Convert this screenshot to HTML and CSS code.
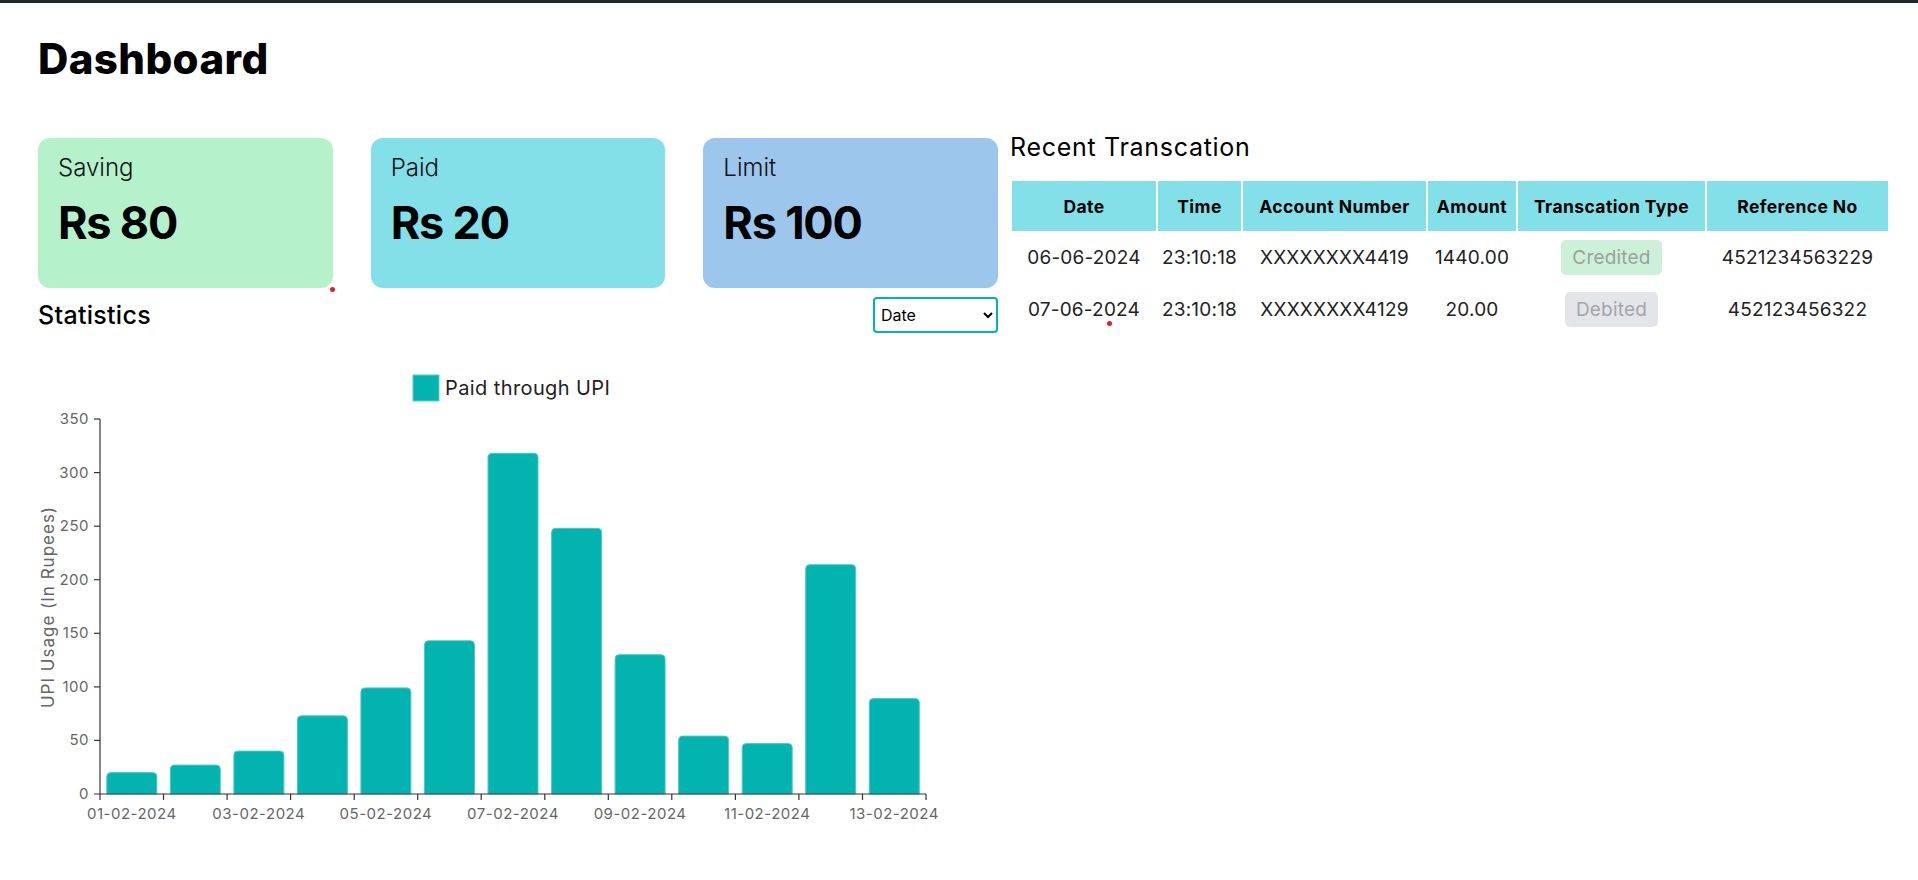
FILE: index.html
```html
<!DOCTYPE html>
<html lang="en">
<head>
<meta charset="utf-8">
<title>Dashboard</title>
<link rel="stylesheet" href="styles.css">
</head>
<body>
<div class="topbar"></div>
<div class="page">
  <h1 class="title">Dashboard</h1>
  <div class="main">
    <section class="left">
      <div class="cards">
        <div class="card card-saving">
          <div class="card-label">Saving</div>
          <div class="card-value">Rs 80</div>
        </div>
        <div class="card card-paid">
          <div class="card-label">Paid</div>
          <div class="card-value">Rs 20</div>
        </div>
        <div class="card card-limit">
          <div class="card-label">Limit</div>
          <div class="card-value">Rs 100</div>
        </div>
      </div>
      <div class="stats-head">
        <h2 class="stats-title">Statistics</h2>
        <select class="stats-select">
          <option>Date</option>
          <option>Month</option>
        </select>
      </div>
      <svg class="chart" width="960" height="470" viewBox="0 0 960 470">
        <rect x="375" y="15" width="26" height="26" fill="#03b3af" stroke="#5ccfcb" stroke-width="1"/>
        <text class="legend-text" x="407" y="35">Paid through UPI</text>

        <text class="axis-title" x="0" y="0" transform="translate(10 247) rotate(-90)" text-anchor="middle" dominant-baseline="central">UPI Usage (In Rupees)</text>

        <g class="bars" fill="#03b3af" stroke="#4ec9c5" stroke-width="1">
          <path d="M68.8 434 V416.6 Q68.8 412.6 72.8 412.6 H114.8 Q118.8 412.6 118.8 416.6 V434 Z"/>
          <path d="M132.3 434 V409.1 Q132.3 405.1 136.3 405.1 H178.3 Q182.3 405.1 182.3 409.1 V434 Z"/>
          <path d="M195.9 434 V395.1 Q195.9 391.1 199.9 391.1 H241.9 Q245.9 391.1 245.9 395.1 V434 Z"/>
          <path d="M259.4 434 V359.8 Q259.4 355.8 263.4 355.8 H305.4 Q309.4 355.8 309.4 359.8 V434 Z"/>
          <path d="M322.9 434 V331.9 Q322.9 327.9 326.9 327.9 H368.9 Q372.9 327.9 372.9 331.9 V434 Z"/>
          <path d="M386.5 434 V284.8 Q386.5 280.8 390.5 280.8 H432.5 Q436.5 280.8 436.5 284.8 V434 Z"/>
          <path d="M450.0 434 V97.3 Q450.0 93.3 454.0 93.3 H496.0 Q500.0 93.3 500.0 97.3 V434 Z"/>
          <path d="M513.6 434 V172.3 Q513.6 168.3 517.6 168.3 H559.6 Q563.6 168.3 563.6 172.3 V434 Z"/>
          <path d="M577.1 434 V298.7 Q577.1 294.7 581.1 294.7 H623.1 Q627.1 294.7 627.1 298.7 V434 Z"/>
          <path d="M640.6 434 V380.1 Q640.6 376.1 644.6 376.1 H686.6 Q690.6 376.1 690.6 380.1 V434 Z"/>
          <path d="M704.2 434 V387.6 Q704.2 383.6 708.2 383.6 H750.2 Q754.2 383.6 754.2 387.6 V434 Z"/>
          <path d="M767.7 434 V208.7 Q767.7 204.7 771.7 204.7 H813.7 Q817.7 204.7 817.7 208.7 V434 Z"/>
          <path d="M831.3 434 V342.6 Q831.3 338.6 835.3 338.6 H877.3 Q881.3 338.6 881.3 342.6 V434 Z"/>
        </g>

        <g class="axis" stroke="#333" stroke-width="1.2">
          <line x1="62" y1="59" x2="62" y2="440"/>
          <line x1="56" y1="434" x2="888" y2="434"/>
          <line x1="56" y1="380.4" x2="62" y2="380.4"/>
          <line x1="56" y1="326.9" x2="62" y2="326.9"/>
          <line x1="56" y1="273.3" x2="62" y2="273.3"/>
          <line x1="56" y1="219.7" x2="62" y2="219.7"/>
          <line x1="56" y1="166.2" x2="62" y2="166.2"/>
          <line x1="56" y1="112.6" x2="62" y2="112.6"/>
          <line x1="56" y1="59" x2="62" y2="59"/>
          <line x1="125.5" y1="434" x2="125.5" y2="440"/>
          <line x1="189.1" y1="434" x2="189.1" y2="440"/>
          <line x1="252.6" y1="434" x2="252.6" y2="440"/>
          <line x1="316.2" y1="434" x2="316.2" y2="440"/>
          <line x1="379.7" y1="434" x2="379.7" y2="440"/>
          <line x1="443.2" y1="434" x2="443.2" y2="440"/>
          <line x1="506.8" y1="434" x2="506.8" y2="440"/>
          <line x1="570.3" y1="434" x2="570.3" y2="440"/>
          <line x1="633.8" y1="434" x2="633.8" y2="440"/>
          <line x1="697.4" y1="434" x2="697.4" y2="440"/>
          <line x1="760.9" y1="434" x2="760.9" y2="440"/>
          <line x1="824.5" y1="434" x2="824.5" y2="440"/>
          <line x1="888" y1="434" x2="888" y2="440"/>
        </g>

        <g class="tick-text" text-anchor="end">
          <text x="51" y="439">0</text>
          <text x="51" y="385.4">50</text>
          <text x="51" y="331.9">100</text>
          <text x="51" y="278.3">150</text>
          <text x="51" y="224.7">200</text>
          <text x="51" y="171.2">250</text>
          <text x="51" y="117.6">300</text>
          <text x="51" y="64">350</text>
        </g>
        <g class="tick-text" text-anchor="middle">
          <text x="93.8" y="459">01-02-2024</text>
          <text x="220.8" y="459">03-02-2024</text>
          <text x="347.9" y="459">05-02-2024</text>
          <text x="475.0" y="459">07-02-2024</text>
          <text x="602.1" y="459">09-02-2024</text>
          <text x="729.2" y="459">11-02-2024</text>
          <text x="856.2" y="459">13-02-2024</text>
        </g>
      </svg>
    </section>

    <section class="right">
      <h2 class="recent-title">Recent Transcation</h2>
      <table class="tx">
        <thead>
          <tr>
            <th class="c-date">Date</th>
            <th class="c-time">Time</th>
            <th class="c-acc">Account Number</th>
            <th class="c-amt">Amount</th>
            <th class="c-type">Transcation Type</th>
            <th class="c-ref">Reference No</th>
          </tr>
        </thead>
        <tbody>
          <tr>
            <td>06-06-2024</td>
            <td>23:10:18</td>
            <td>XXXXXXXX4419</td>
            <td>1440.00</td>
            <td><span class="badge badge-credit">Credited</span></td>
            <td>4521234563229</td>
          </tr>
          <tr>
            <td>07-06-2024</td>
            <td>23:10:18</td>
            <td>XXXXXXXX4129</td>
            <td>20.00</td>
            <td><span class="badge badge-debit">Debited</span></td>
            <td>452123456322</td>
          </tr>
        </tbody>
      </table>
    </section>
  </div>
</div>
<span class="dot dot-a"></span>
<span class="dot dot-b"></span>
</body>
</html>
```

FILE: styles.css
```css
* { box-sizing: border-box; }

html, body {
  margin: 0;
  padding: 0;
  background: #ffffff;
}

body {
  position: relative;
  font-family: "Inter", "Open Sans", sans-serif;
  color: #111;
  width: 1918px;
  height: 880px;
  overflow: hidden;
}

.topbar {
  height: 3px;
  background: #1f262b;
}

.page {
  padding: 0 28px 0 38px;
}

.title {
  margin: 0;
  padding-top: 31px;
  font-size: 42px;
  line-height: 50px;
  font-weight: 800;
  letter-spacing: 0.4px;
  color: #000;
}

.main {
  display: flex;
  gap: 12px;
  margin-top: 48px;
}

.left {
  width: 960px;
  flex: none;
  padding-top: 6px;
}

.cards {
  display: flex;
  gap: 38px;
}

.card {
  width: 295px;
  height: 150px;
  border-radius: 12px;
  padding: 15px 20px 0 20px;
}

.card-saving { background: #b5f2cb; }
.card-paid { background: #83e0e8; }
.card-limit { background: #9cc6ec; }

.card-label {
  font-size: 24px;
  line-height: 29px;
  font-weight: 300;
  color: #111;
}

.card-value {
  margin-top: 13px;
  font-size: 45px;
  line-height: 56px;
  font-weight: 700;
  letter-spacing: -1.2px;
  color: #000;
}

.stats-head {
  display: flex;
  align-items: center;
  justify-content: space-between;
  height: 36px;
  margin-top: 9px;
}

.stats-title {
  margin: 0;
  font-size: 25px;
  line-height: 30px;
  font-weight: 500;
  letter-spacing: 0.3px;
  color: #000;
}

.stats-select {
  width: 125px;
  height: 36px;
  border: 2px solid #03b3af;
  border-radius: 4px;
  background: #fff;
  font-family: "Inter", sans-serif;
  font-size: 16px;
  color: #000;
  padding: 0 2px;
}

.chart {
  display: block;
  margin-top: 27px;
  font-family: "Inter", "Open Sans", sans-serif;
}

.legend-text {
  font-size: 20px;
  letter-spacing: 0.4px;
  fill: #222;
}

.axis-title {
  font-size: 17px;
  letter-spacing: 1px;
  fill: #666;
}

.tick-text {
  font-size: 15px;
  letter-spacing: 0.5px;
  fill: #666;
}

.right {
  flex: 1;
}

.recent-title {
  margin: 0;
  font-size: 25px;
  line-height: 30px;
  font-weight: 400;
  letter-spacing: 0.7px;
  color: #000;
}

.tx {
  margin-top: 19px;
  border-collapse: separate;
  border-spacing: 2px 0;
  table-layout: fixed;
}

.tx th {
  height: 50px;
  background: #83e0e8;
  font-size: 17.5px;
  font-weight: 700;
  letter-spacing: 0.4px;
  color: #000;
  padding: 0;
  text-align: center;
  white-space: nowrap;
}

.tx td {
  height: 52px;
  font-size: 19px;
  letter-spacing: 0.2px;
  color: #222;
  text-align: center;
  padding: 0;
  white-space: nowrap;
}

.c-date { width: 144px; }
.c-time { width: 83px; }
.c-acc { width: 183px; }
.c-amt { width: 88px; }
.c-type { width: 187px; }
.c-ref { width: 181px; }

.badge {
  display: inline-block;
  padding: 5px 11px;
  line-height: 25px;
  border-radius: 5px;
  font-size: 19px;
  letter-spacing: 0.2px;
}

.badge-credit {
  background: #cdf0d9;
  color: #98a39b;
}

.badge-debit {
  background: #e4e5e8;
  color: #a2a5aa;
}

.dot {
  position: absolute;
  width: 5px;
  height: 5px;
  border-radius: 50%;
  background: #e0202a;
}

.dot-a { left: 330px; top: 287px; }
.dot-b { left: 1107px; top: 321px; }
```
